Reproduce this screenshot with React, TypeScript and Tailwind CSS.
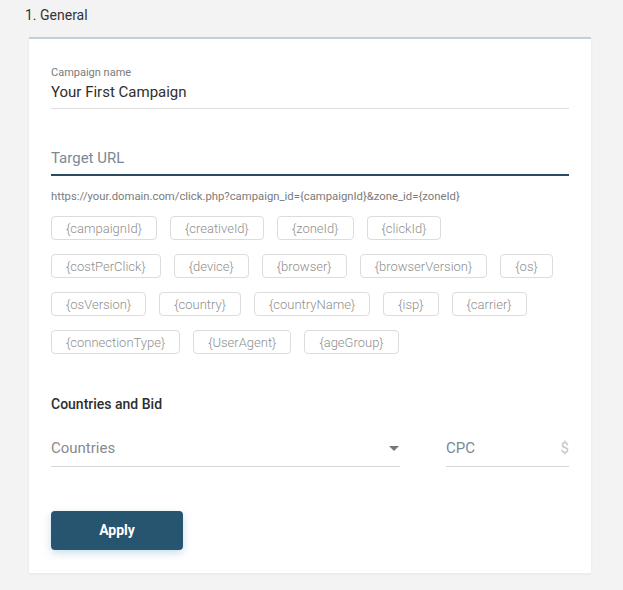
import { FC } from 'react';

const TOKENS: string[][] = [
  ['{campaignId}', '{creativeId}', '{zoneId}', '{clickId}'],
  ['{costPerClick}', '{device}', '{browser}', '{browserVersion}', '{os}'],
  ['{osVersion}', '{country}', '{countryName}', '{isp}', '{carrier}'],
  ['{connectionType}', '{UserAgent}', '{ageGroup}'],
];

const Chip: FC<{ label: string }> = ({ label }) => (
  <span className="h-[24px] px-[14px] flex items-center border border-[#dcdcdc] rounded-[4px] text-[13px] font-light text-[#8f8f8f] leading-none">
    {label}
  </span>
);

const App: FC = () => {
  return (
    <div className="min-h-[590px] bg-[#f3f3f3] font-['Roboto',sans-serif] pb-[17px]">
      <div className="h-[37px] pl-[25px] pt-[6px] text-[14px] leading-[18px] text-[#333]">1. General</div>

      <div className="ml-[29px] w-[562px] bg-white border-t-2 border-[#bfd0de] shadow-[0_1px_3px_rgba(0,0,0,0.06)] px-[22px] pt-[27px] pb-[23px]">
        {/* campaign name */}
        <div className="border-b border-[#dddddd] pb-[6px]">
          <div className="text-[11px] leading-[13px] text-[#7b7b7b]">Campaign name</div>
          <div className="mt-[3px] text-[15px] leading-[20px] text-[#2e2e2e]">Your First Campaign</div>
        </div>

        {/* target url */}
        <div className="mt-[39px] border-b-2 border-[#2c4a62] pb-[6px] text-[15px] leading-[20px] text-[#7b8896]">
          Target URL
        </div>
        <div className="mt-[14px] text-[11.3px] leading-[13px] text-[#7b7b7b]">
          https://your.domain.com/click.php?campaign_id={'{campaignId}'}&amp;zone_id={'{zoneId}'}
        </div>

        <div className="mt-[13px] flex flex-col gap-[14px]">
          {TOKENS.map((row, i) => (
            <div key={i} className="flex gap-[13px]">
              {row.map((t) => (
                <Chip key={t} label={t} />
              ))}
            </div>
          ))}
        </div>

        <div className="mt-[41px] text-[14px] leading-[18px] font-medium text-[#2e2e2e]">Countries and Bid</div>

        <div className="mt-[25px] flex gap-[46px]">
          <div className="w-[349px] flex items-center justify-between border-b border-[#d6d6d6] pb-[8px]">
            <span className="text-[15px] leading-[20px] text-[#8a8a8a]">Countries</span>
            <svg width="10" height="5" viewBox="0 0 10 5" className="mr-[1px]">
              <path d="M0 0h10L5 5z" fill="#777" />
            </svg>
          </div>
          <div className="flex-1 flex items-center justify-between border-b border-[#d6d6d6] pb-[8px]">
            <span className="text-[15px] leading-[20px] text-[#7b8896]">CPC</span>
            <span className="text-[15px] leading-[20px] text-[#c4c4c4]">$</span>
          </div>
        </div>

        <button className="mt-[44px] w-[132px] h-[39px] rounded-[4px] bg-[#27556f] text-white text-[14px] font-bold shadow-[0_3px_8px_rgba(39,120,170,0.25)]">
          Apply
        </button>
      </div>
    </div>
  );
};

export default App;
